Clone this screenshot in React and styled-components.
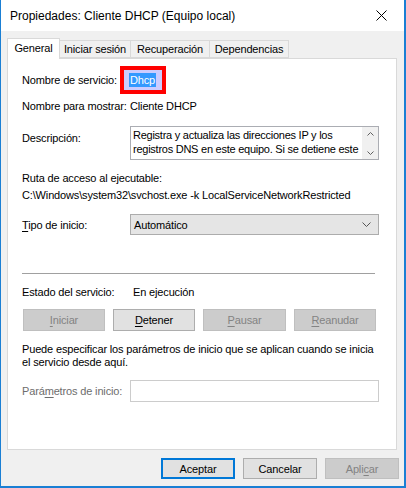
import styled, { createGlobalStyle } from "styled-components";

const Global = createGlobalStyle`
  html, body {
    margin: 0;
    padding: 0;
    background: #ffffff;
  }
  body {
    font-family: "Liberation Sans", Arial, sans-serif;
    font-size: 11px;
    letter-spacing: -0.15px;
    color: #000;
  }
  * {
    box-sizing: border-box;
  }
`;

const Window = styled.div`
  width: 406px;
  height: 488px;
  display: flex;
  flex-direction: column;
  border-left: 1px solid #1a7fd4;
  border-right: 2px solid #1a7fd4;
  border-bottom: 2px solid #1a7fd4;
  background: #f0f0f0;
`;

const TitleBar = styled.div`
  height: 31px;
  flex: none;
  display: flex;
  align-items: center;
  justify-content: space-between;
  padding: 0 8px 0 9px;
  background: #ffffff;
  font-size: 12px;
  letter-spacing: 0;
`;

const Close = styled.div`
  width: 30px;
  display: flex;
  justify-content: center;
  align-items: center;
`;

const Body = styled.div`
  flex: 1;
  display: flex;
  flex-direction: column;
  padding: 7px 0 0 6px;
`;

const TabRow = styled.div`
  display: flex;
  align-items: flex-end;
  height: 20px;
  position: relative;
  z-index: 1;
`;

const Tab = styled.div`
  width: ${(p) => p.$w}px;
  height: ${(p) => (p.$active ? 21 : 18)}px;
  margin-left: ${(p) => (p.$first ? 0 : -1)}px;
  margin-bottom: ${(p) => (p.$active ? -1 : 0)}px;
  display: flex;
  justify-content: center;
  align-items: ${(p) => (p.$active ? "flex-start" : "center")};
  padding-top: ${(p) => (p.$active ? 3 : 0)}px;
  border: 1px solid #d9d9d9;
  border-bottom: ${(p) => (p.$active ? "none" : "1px solid #d9d9d9")};
  background: ${(p) => (p.$active ? "#ffffff" : "#f0f0f0")};
  white-space: nowrap;
`;

const Panel = styled.div`
  width: 390px;
  height: 392px;
  display: flex;
  flex-direction: column;
  padding: 7px 17px 0 14px;
  background: #ffffff;
  border: 1px solid #d9d9d9;
`;

const Field = styled.div`
  display: flex;
  align-items: ${(p) => (p.$top ? "flex-start" : "center")};
  height: ${(p) => p.$h}px;
  margin-top: ${(p) => p.$mt || 0}px;
  flex: none;
`;

const Label = styled.div`
  width: 108px;
  flex: none;
  line-height: 14px;
  white-space: nowrap;
  padding-top: ${(p) => p.$pt || 0}px;
  color: ${(p) => (p.$disabled ? "#6d6d6d" : "#000")};
`;

const Value = styled.div`
  line-height: 14px;
  white-space: nowrap;
`;

const Highlight = styled.div`
  width: 46px;
  height: 28px;
  margin-left: -10px;
  display: flex;
  align-items: center;
  padding-left: 5px;
  border: 4px solid #ff0000;
  background: #ccccff;
`;

const Selected = styled.span`
  background: #3399ff;
  color: #ffffff;
  line-height: 14px;
  padding: 0 1px;
`;

const DescBox = styled.div`
  width: 249px;
  height: 34px;
  display: flex;
  border: 1px solid #abadb3;
`;

const DescText = styled.div`
  flex: 1;
  padding: 1px 1px 0 2px;
  line-height: 14px;
  letter-spacing: -0.25px;
  overflow: hidden;
  white-space: nowrap;
`;

const Scroll = styled.div`
  width: 16px;
  flex: none;
  display: flex;
  flex-direction: column;
  justify-content: space-between;
  align-items: center;
  padding: 5px 0 4px;
  background: #f0f0f0;
`;

const PathBlock = styled.div`
  margin-top: 10px;
  line-height: 17px;
  white-space: nowrap;
`;

const Select = styled.div`
  width: 249px;
  height: 21px;
  display: flex;
  align-items: center;
  justify-content: space-between;
  padding: 0 7px 0 3px;
  background: #e5e5e5;
  border: 1px solid #acacac;
`;

const Separator = styled.div`
  width: 353px;
  height: 1px;
  margin-top: 38px;
  flex: none;
  background: #a0a0a0;
`;

const StatusValue = styled.div`
  margin-left: 3px;
  line-height: 14px;
`;

const ButtonRow = styled.div`
  display: flex;
  gap: ${(p) => p.$gap}px;
  margin-top: ${(p) => p.$mt}px;
  justify-content: ${(p) => (p.$end ? "flex-end" : "flex-start")};
  padding-left: ${(p) => p.$pl || 0}px;
  padding-right: ${(p) => p.$pr || 0}px;
  flex: none;
`;

const Button = styled.div`
  width: ${(p) => p.$w}px;
  height: ${(p) => p.$h}px;
  display: flex;
  align-items: center;
  justify-content: center;
  background: ${(p) => (p.$disabled ? "#cccccc" : "#e1e1e1")};
  border: ${(p) =>
    p.$default ? "2px solid #0078d7" : p.$disabled ? "1px solid #bfbfbf" : "1px solid #adadad"};
  color: ${(p) => (p.$disabled ? "#838383" : "#000")};
`;

const Para = styled.div`
  margin-top: 12px;
  line-height: 13px;
  white-space: nowrap;
`;

const Input = styled.div`
  width: 249px;
  height: 22px;
  border: 1px solid #cccccc;
  background: #ffffff;
`;

const Key = styled.span`
  text-decoration: underline;
  text-underline-offset: 2px;
`;

const tabs = [
  { label: "General", w: 53 },
  { label: "Iniciar sesión", w: 72 },
  { label: "Recuperación", w: 80 },
  { label: "Dependencias", w: 80 },
];

const Chevron = ({ up, w = 7, h = 4, color = "#606060" }) => (
  <svg width={w} height={h} viewBox={`0 0 ${w} ${h}`}>
    <polyline
      points={
        up
          ? `0.5,${h - 0.5} ${w / 2},0.5 ${w - 0.5},${h - 0.5}`
          : `0.5,0.5 ${w / 2},${h - 0.5} ${w - 0.5},0.5`
      }
      fill="none"
      stroke={color}
      strokeWidth="1"
    />
  </svg>
);

export default function App() {
  return (
    <>
      <Global />
      <Window>
        <TitleBar>
          <span>Propiedades: Cliente DHCP (Equipo local)</span>
          <Close>
            <svg width="11" height="11" viewBox="0 0 11 11">
              <path d="M0.5 0.5 L10.5 10.5 M10.5 0.5 L0.5 10.5" stroke="#000" strokeWidth="1" />
            </svg>
          </Close>
        </TitleBar>
        <Body>
          <TabRow>
            {tabs.map((t, i) => (
              <Tab key={t.label} $w={t.w} $first={i === 0} $active={i === 0}>
                {t.label}
              </Tab>
            ))}
          </TabRow>
          <Panel>
            <Field $h={28}>
              <Label>Nombre de servicio:</Label>
              <Highlight>
                <Selected>Dhcp</Selected>
              </Highlight>
            </Field>
            <Field $h={24}>
              <Label>Nombre para mostrar:</Label>
              <Value>Cliente DHCP</Value>
            </Field>
            <Field $h={34} $mt={8} $top>
              <Label $pt={5}>Descripción:</Label>
              <DescBox>
                <DescText>
                  Registra y actualiza las direcciones IP y los
                  <br />
                  registros DNS en este equipo. Si se detiene este
                </DescText>
                <Scroll>
                  <Chevron up />
                  <Chevron />
                </Scroll>
              </DescBox>
            </Field>
            <PathBlock>
              Ruta de acceso al ejecutable:
              <br />
              C:\Windows\system32\svchost.exe -k LocalServiceNetworkRestricted
            </PathBlock>
            <Field $h={21} $mt={10}>
              <Label>
                <Key>T</Key>ipo de inicio:
              </Label>
              <Select>
                <span>Automático</span>
                <Chevron w={9} h={5} color="#555" />
              </Select>
            </Field>
            <Separator />
            <Field $h={14} $mt={11}>
              <Label>Estado del servicio:</Label>
              <StatusValue>En ejecución</StatusValue>
            </Field>
            <ButtonRow $gap={8} $mt={10} $pl={1}>
              <Button $w={82} $h={22} $disabled>
                <span><Key>I</Key>niciar</span>
              </Button>
              <Button $w={82} $h={22}>
                <span><Key>D</Key>etener</span>
              </Button>
              <Button $w={83} $h={22} $disabled>
                <span><Key>P</Key>ausar</span>
              </Button>
              <Button $w={82} $h={22} $disabled>
                <span><Key>R</Key>eanudar</span>
              </Button>
            </ButtonRow>
            <Para>
              Puede especificar los parámetros de inicio que se aplican cuando se inicia
              <br />
              el servicio desde aquí.
            </Para>
            <Field $h={22} $mt={11}>
              <Label $disabled>
                Pará<Key>m</Key>etros de inicio:
              </Label>
              <Input />
            </Field>
          </Panel>
          <ButtonRow $gap={8} $mt={8} $end $pr={5}>
            <Button $w={74} $h={21} $default>Aceptar</Button>
            <Button $w={74} $h={21}>Cancelar</Button>
            <Button $w={74} $h={21} $disabled>
              <span>Apli<Key>c</Key>ar</span>
            </Button>
          </ButtonRow>
        </Body>
      </Window>
    </>
  );
}
